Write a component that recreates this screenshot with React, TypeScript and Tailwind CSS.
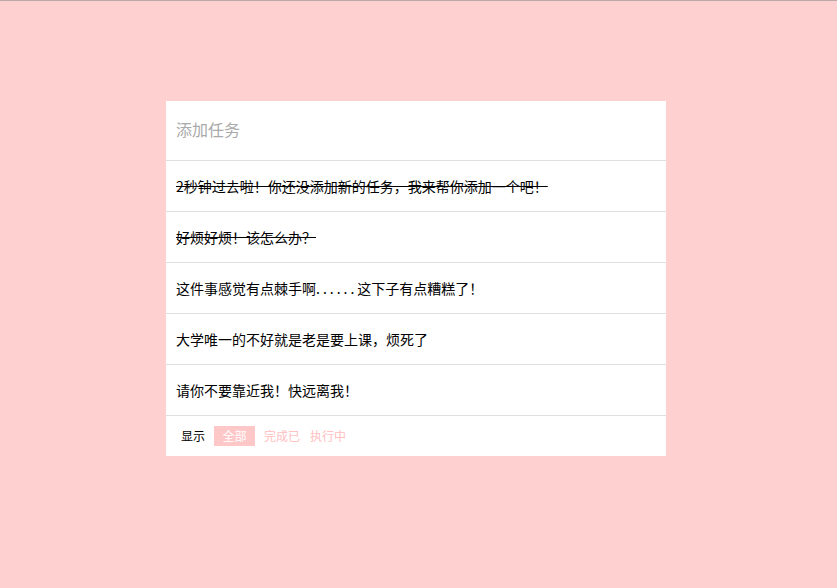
const todos = [
  { text: '2秒钟过去啦！你还没添加新的任务，我来帮你添加一个吧！', done: true },
  { text: '好烦好烦！该怎么办？', done: true },
  { text: '这件事感觉有点棘手啊......这下子有点糟糕了！', done: false },
  { text: '大学唯一的不好就是老是要上课，烦死了', done: false },
  { text: '请你不要靠近我！快远离我！', done: false },
];

// ASCII dots in the original font are wider; space them out a little
const renderText = (text: string) =>
  text.split(/(\.+)/).map((part, i) =>
    part.startsWith('.') ? (
      <span key={i} className="tracking-[3px]">
        {part}
      </span>
    ) : (
      part
    )
  );

const App = () => {
  return (
    <div
      className="min-h-[588px] bg-[#ffd0d0] border-t border-[#bba9a9]"
      style={{ fontFamily: '"Noto Sans CJK SC", "Liberation Sans", sans-serif' }}
    >
      <div className="ml-[166px] mt-[100px] w-[500px] bg-white">
        {/* input */}
        <div className="h-[60px] flex items-center px-[10px] pb-[3px] border-b border-[#e0e0e0]">
          <input
            placeholder="添加任务"
            className="w-full outline-none text-[16px] text-[#333] placeholder:text-[#aaa] bg-transparent"
          />
        </div>

        {/* list */}
        {todos.map((todo, i) => (
          <div key={i} className="h-[51px] flex items-center px-[10px] border-b border-[#e0e0e0]">
            <span className={`text-[14px] text-black ${todo.done ? 'line-through' : ''}`}>{renderText(todo.text)}</span>
          </div>
        ))}

        {/* filters */}
        <div className="h-[40px] flex items-center pl-[15px] text-[12px]">
          <span className="text-black mr-[9px]">显示</span>
          <button className="w-[41px] h-[20px] bg-[#ffc8c8] text-white mr-[9px]">全部</button>
          <button className="text-[#ffc0c0] mr-[10px]">完成已</button>
          <button className="text-[#ffc0c0]">执行中</button>
        </div>
      </div>
    </div>
  );
};

export default App;
